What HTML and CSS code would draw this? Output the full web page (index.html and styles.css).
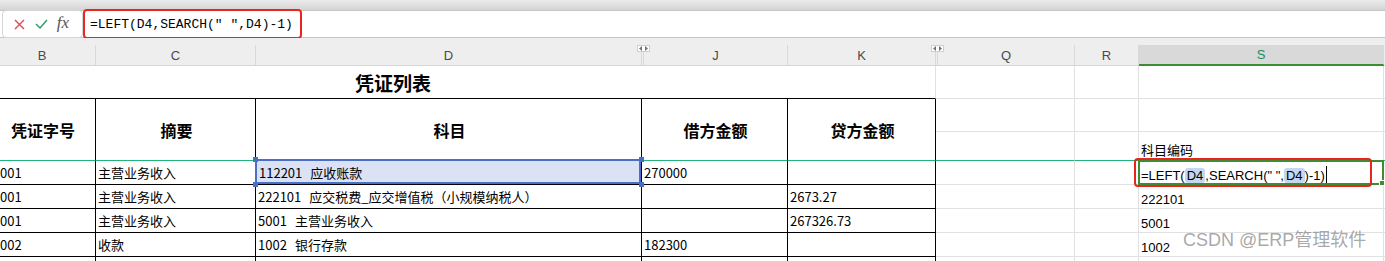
FILE: index.html
```html
<!DOCTYPE html>
<html lang="zh-CN">
<head>
    <meta charset="UTF-8">
    <meta name="viewport" content="width=device-width, initial-scale=1.0">
    <title>凭证列表</title>
    <link rel="stylesheet" href="styles.css">
</head>
<body>
    <div class="toolbar-edge"></div>
    <div class="formula-bar">
        <div class="fx-tools">
            <span class="tool"><svg width="11" height="11" viewBox="0 0 11 11"><path d="M1 1L10 10M10 1L1 10" stroke="#e0474e" stroke-width="1.4" fill="none"/></svg></span>
            <span class="tool"><svg width="13" height="10" viewBox="0 0 13 10"><path d="M1 5l4 4 7-8" stroke="#2e9a6a" stroke-width="1.4" fill="none"/></svg></span>
            <span class="tool fx">fx</span>
        </div>
        <div class="mark">=LEFT(D4,SEARCH(" ",D4)-1)</div>
    </div>

    <div class="sheet">
        <div class="grid">
            <!-- column letters -->
            <div class="ch"><span class="lbl">B</span></div>
            <div class="ch"><span class="lbl">C</span></div>
            <div class="ch"><span class="lbl">D</span><span class="hid"><svg width="11" height="5" viewBox="0 0 11 5"><path d="M4 0v5L1 2.5zM7 0v5l3-2.5z" fill="#6a7385"/></svg></span></div>
            <div class="ch"><span class="lbl after-hid">J</span></div>
            <div class="ch"><span class="lbl">K</span><span class="hid"><svg width="11" height="5" viewBox="0 0 11 5"><path d="M4 0v5L1 2.5zM7 0v5l3-2.5z" fill="#6a7385"/></svg></span></div>
            <div class="ch"><span class="lbl after-hid">Q</span></div>
            <div class="ch"><span class="lbl">R</span></div>
            <div class="ch current"><span class="lbl">S</span></div>
            <div class="ch"><span class="lbl"></span></div>

            <!-- title -->
            <div class="c title">凭证列表</div>
            <div class="c"></div><div class="c"></div><div class="c"></div><div class="c"></div>

            <!-- table header -->
            <div class="c th">凭证字号</div>
            <div class="c th">摘要</div>
            <div class="c th">科目</div>
            <div class="c th">借方金额</div>
            <div class="c th">贷方金额</div>
            <div class="c"></div><div class="c"></div><div class="c"></div><div class="c"></div>
            <div class="c sep"></div><div class="c sep"></div>
            <div class="c sep s-col">科目编码</div>
            <div class="c sep"></div>

            <!-- row 4 -->
            <div class="c td first">001</div>
            <div class="c td">主营业务收入</div>
            <div class="c td picked">
                <span class="sel"></span>
                <span class="knob k1"></span><span class="knob k2"></span><span class="knob k3"></span><span class="knob k4"></span>
                <span class="txt"><span class="code">112201</span>应收账款</span>
            </div>
            <div class="c td">270000</div>
            <div class="c td"></div>
            <div class="c"></div><div class="c"></div>
            <div class="c s-col active">
                <span class="cursor-box"></span>
                <span class="note"></span>
                =LEFT(<span class="ref">D4</span>,SEARCH(" ",<span class="ref">D4</span>)-1)<span class="caret"></span>
            </div>
            <div class="c"></div>

            <!-- row 5 -->
            <div class="c td first">001</div>
            <div class="c td">主营业务收入</div>
            <div class="c td"><span class="code">222101</span>应交税费_应交增值税（小规模纳税人）</div>
            <div class="c td"></div>
            <div class="c td">2673.27</div>
            <div class="c"></div><div class="c"></div>
            <div class="c s-col">222101</div>
            <div class="c"></div>

            <!-- row 6 -->
            <div class="c td first">001</div>
            <div class="c td">主营业务收入</div>
            <div class="c td"><span class="code">5001</span>主营业务收入</div>
            <div class="c td"></div>
            <div class="c td">267326.73</div>
            <div class="c"></div><div class="c"></div>
            <div class="c s-col">5001</div>
            <div class="c"></div>

            <!-- row 7 -->
            <div class="c td first">002</div>
            <div class="c td">收款</div>
            <div class="c td"><span class="code">1002</span>银行存款</div>
            <div class="c td">182300</div>
            <div class="c td"></div>
            <div class="c"></div><div class="c"></div>
            <div class="c s-col">1002</div>
            <div class="c"></div>

            <!-- row 8 -->
            <div class="c td"></div><div class="c td"></div><div class="c td"></div><div class="c td"></div><div class="c td"></div>
            <div class="c"></div><div class="c"></div><div class="c"></div><div class="c"></div>
        </div>
    </div>

    <div class="watermark">CSDN @ERP管理软件</div>
</body>
</html>
```

FILE: styles.css
```css
body {
    margin: 0;
    width: 1385px;
    height: 261px;
    overflow: hidden;
    position: relative;
    background: #fff;
    font-family: "Noto Sans CJK SC", sans-serif;
    color: #000;
}
.toolbar-edge {
    height: 10px;
    background: linear-gradient(#ebebeb, #d4d4d4);
}
.formula-bar {
    height: 28px;
    box-sizing: border-box;
    border-top: 1px solid #c6c6c6;
    border-bottom: 1px solid #c6c6c6;
    padding-left: 2px;
    display: flex;
    background: #fff;
}
.fx-tools {
    width: 81px;
    box-sizing: border-box;
    margin: -1px 0;
    padding-left: 5px;
    border: 1px solid #d6d6d6;
    border-radius: 4px;
    display: flex;
    align-items: center;
}
.tool {
    width: 22px;
    display: flex;
    justify-content: center;
    align-items: center;
}
.fx {
    font-family: "Liberation Serif", serif;
    font-style: italic;
    font-size: 17px;
    color: #555;
    margin-top: -2px;
}
.mark {
    width: 219px;
    box-sizing: border-box;
    margin: -2px 0;
    padding-left: 5px;
    border: 2px solid #e8261e;
    border-radius: 4px;
    display: flex;
    align-items: center;
    font-family: "Liberation Mono", monospace;
    font-size: 13px;
    white-space: pre;
}
.sheet {
    overflow: hidden;
}
.grid {
    display: grid;
    margin-left: -11px;
    grid-template-columns: 107px 160px 386px 146px 148px 139px 64px 245px 40px;
    grid-template-rows: 28px 33px 33px 29px 24px 24px 24px 24px 24px;
}

/* column letters */
.ch {
    position: relative;
    box-sizing: border-box;
    padding-top: 7px;
    background: #eeeeee;
    border-bottom: 1px solid #d6d6d6;
}
.ch .lbl {
    height: 20px;
    box-sizing: border-box;
    border-right: 1px solid #d9d9d9;
    display: flex;
    justify-content: center;
    align-items: center;
    font-family: "Liberation Sans", sans-serif;
    font-size: 13px;
    color: #4a4a4a;
}
.ch .after-hid {
    margin-left: 1px;
    border-left: 1px solid #d9d9d9;
}
.ch.current {
    border-bottom-color: #3d8c34;
}
.ch.current .lbl {
    background: #d9d9d9;
    border-bottom: 1px solid #3d8c34;
    color: #1c8a5e;
}
.hid {
    position: absolute;
    right: -8px;
    top: 7px;
    width: 13px;
    height: 7px;
    box-sizing: border-box;
    background: #fff;
    border: 1px solid #cfcfcf;
    display: flex;
    justify-content: center;
    align-items: center;
    z-index: 2;
}

/* cells */
.c {
    box-sizing: border-box;
    border-right: 1px solid #e1e1e1;
    border-bottom: 1px solid #e1e1e1;
    padding-left: 2px;
    display: flex;
    align-items: center;
    font-size: 13px;
    white-space: nowrap;
}
.title {
    grid-column: span 5;
    justify-content: center;
    padding-right: 140px;
    border-bottom-color: #000;
    font-size: 19px;
    font-weight: bold;
}
.th {
    grid-row: span 2;
    justify-content: center;
    border-right-color: #000;
    border-bottom-color: #1fb47a;
    font-size: 16px;
    font-weight: bold;
}
.sep {
    border-bottom-color: #1fb47a;
}
.td {
    border-right-color: #000;
    border-bottom-color: #000;
}
.td.first {
    padding-left: 11px;
}
.code {
    margin-right: 8px;
}
.s-col {
    align-items: flex-end;
    padding-bottom: 1px;
    font-family: "Liberation Sans", "Noto Sans CJK SC", sans-serif;
}
.s-col:first-child {
    font-family: "Noto Sans CJK SC", sans-serif;
}

/* referenced cell D4 */
.picked {
    position: relative;
    background: #dbe2f5;
    padding-left: 3px;
}
.sel {
    position: absolute;
    left: -1px;
    top: -2px;
    right: 0;
    bottom: 0;
    border: 2px solid #4a6fc9;
}
.knob {
    position: absolute;
    width: 5px;
    height: 5px;
    background: #4a6fc9;
    z-index: 2;
}
.k1 { left: -3px; top: -4px; }
.k2 { left: -3px; top: 21px; }
.k3 { left: 383px; top: -4px; }
.k4 { left: 383px; top: 21px; }
.txt {
    position: relative;
}

/* active cell S4 */
.active {
    position: relative;
}
.cursor-box {
    position: absolute;
    left: -1px;
    top: -1px;
    width: 246px;
    height: 25px;
    box-sizing: border-box;
    border: 2px solid #3d8c34;
}
.cursor-box::after {
    content: "";
    position: absolute;
    right: -3px;
    bottom: -3px;
    width: 4px;
    height: 4px;
    background: #3d8c34;
    border: 1px solid #fff;
}
.note {
    position: absolute;
    left: -5px;
    top: -3px;
    width: 238px;
    height: 29px;
    box-sizing: border-box;
    border: 2px solid #e8261e;
    border-radius: 4px;
    z-index: 3;
}
.ref {
    background: #c4d7f1;
    border-radius: 3px;
    padding: 0 2px;
    white-space: pre;
}
.caret {
    display: inline-block;
    width: 1px;
    height: 17px;
    background: #000;
    margin-left: 1px;
    align-self: flex-end;
}
.watermark {
    position: absolute;
    left: 1183px;
    top: 230px;
    line-height: 20px;
    font-family: "Liberation Sans", "Noto Sans CJK SC", sans-serif;
    font-size: 18px;
    color: rgba(130, 130, 130, 0.7);
    white-space: nowrap;
}
```
